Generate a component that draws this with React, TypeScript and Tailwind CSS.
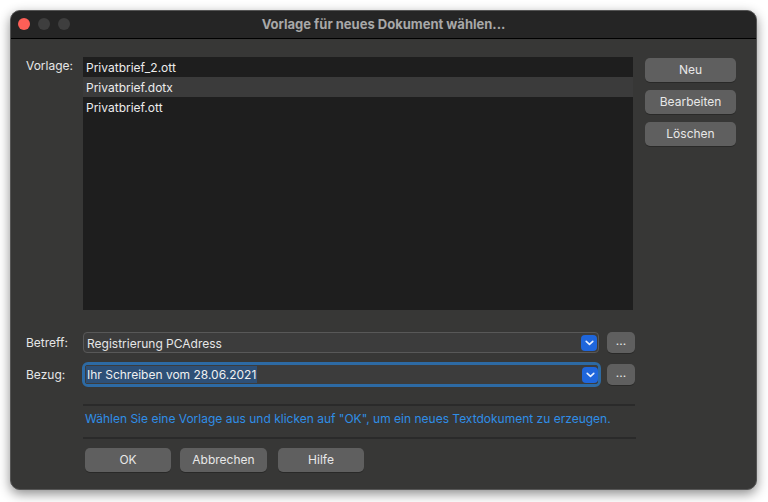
import React from 'react';

const font = { fontFamily: 'Inter, "Liberation Sans", Arial, sans-serif' };

function Btn({ children, className = '' }: { children: React.ReactNode; className?: string }) {
  return (
    <div
      className={`flex items-center justify-center rounded-[5px] bg-[#5f5f5f] text-[12px] text-[#e8e8e8] shadow-[0_1px_0_rgba(0,0,0,0.25)] ${className}`}
    >
      {children}
    </div>
  );
}

function Chevron() {
  return (
    <div className="flex h-[16px] w-[16px] items-center justify-center rounded-[4px] bg-[#1f66dc]">
      <svg width="9" height="6" viewBox="0 0 9 6" fill="none">
        <path d="M1.2 1.3 L4.5 4.4 L7.8 1.3" stroke="#e8f0ff" strokeWidth="1.6" strokeLinecap="round" strokeLinejoin="round" />
      </svg>
    </div>
  );
}

export default function App() {
  const items = ['Privatbrief_2.ott', 'Privatbrief.dotx', 'Privatbrief.ott'];
  return (
    <div className="h-[502px] w-[768px] bg-white pl-[10px] pt-[10px]" style={font}>
      <div className="flex h-[480px] w-[747px] flex-col overflow-hidden rounded-[10px] border border-[#555] bg-[#373736] shadow-[0_4px_12px_rgba(0,0,0,0.45)]">
        {/* title bar */}
        <div className="relative flex h-[28px] shrink-0 items-center justify-center border-b border-black bg-[#252525]">
          <div className="absolute left-[7px] top-[7px] flex gap-[8px]">
            <span className="h-[12px] w-[12px] rounded-full bg-[#fe5f57]" />
            <span className="h-[12px] w-[12px] rounded-full bg-[#3e3e3e]" />
            <span className="h-[12px] w-[12px] rounded-full bg-[#3e3e3e]" />
          </div>
          <span className="text-[13px] font-bold text-[#a8a8a8]">Vorlage für neues Dokument wählen...</span>
        </div>

        {/* body */}
        <div className="flex flex-col pl-[15px] pt-[18px]">
          <div className="flex">
            <div className="w-[57px] pt-[0px] text-[12px] text-[#e6e6e6]">Vorlage:</div>
            <div className="h-[253px] w-[550px] bg-[#1e1e1e]">
              {items.map((it, i) => (
                <div
                  key={it}
                  className={`flex h-[20px] items-center pl-[3px] pt-[2px] text-[12px] text-[#ececec] ${i === 1 ? 'bg-[#3b3b3b]' : ''}`}
                >
                  {it}
                </div>
              ))}
            </div>
            <div className="ml-[12px] flex flex-col gap-[8px] pt-[1px]">
              <Btn className="h-[24px] w-[91px]">Neu</Btn>
              <Btn className="h-[24px] w-[91px]">Bearbeiten</Btn>
              <Btn className="h-[24px] w-[91px]">Löschen</Btn>
            </div>
          </div>

          {/* Betreff */}
          <div className="mt-[22px] flex items-center">
            <div className="w-[57px] text-[12px] text-[#e6e6e6]">Betreff:</div>
            <div className="flex h-[21px] w-[516px] items-center justify-between rounded-[4px] border border-[#585858] bg-[#3c3c3c] pl-[3px] pr-[1px]">
              <span className="pt-[2px] text-[12px] text-[#e6e6e6]">Registrierung PCAdress</span>
              <Chevron />
            </div>
            <Btn className="ml-[8px] h-[21px] w-[28px] pb-[3px]">...</Btn>
          </div>

          {/* Bezug */}
          <div className="mt-[9px] flex items-center">
            <div className="w-[56px] text-[12px] text-[#e6e6e6]">Bezug:</div>
            <div className="rounded-[6px] border-[3px] border-[#2d6aa4]">
              <div className="flex h-[19px] w-[513px] items-center justify-between rounded-[3px] bg-[#3c3c3c] pl-[1px] pr-[0px]">
                <span className="bg-[#2e5077] px-[1px] text-[12px] leading-[17px] text-[#f0f0f0]">Ihr Schreiben vom 28.06.2021</span>
                <Chevron />
              </div>
            </div>
            <Btn className="ml-[6px] h-[21px] w-[28px] pb-[3px]">...</Btn>
          </div>

          {/* info */}
          <div className="ml-[57px] mt-[17px] w-[552px] border-t-2 border-[#2a2a2a]" />
          <div className="ml-[59px] mt-[4px] text-[12px] text-[#2f8ee6]">
            Wählen Sie eine Vorlage aus und klicken auf "OK", um ein neues Textdokument zu erzeugen.
          </div>
          <div className="ml-[57px] mt-[9px] w-[553px] border-t-2 border-[#2a2a2a]" />

          <div className="ml-[59px] mt-[9px] flex gap-[9px]">
            <Btn className="h-[24px] w-[86px]">OK</Btn>
            <Btn className="h-[24px] w-[87px]">Abbrechen</Btn>
            <Btn className="ml-[2px] h-[24px] w-[86px]">Hilfe</Btn>
          </div>
        </div>
      </div>
    </div>
  );
}
